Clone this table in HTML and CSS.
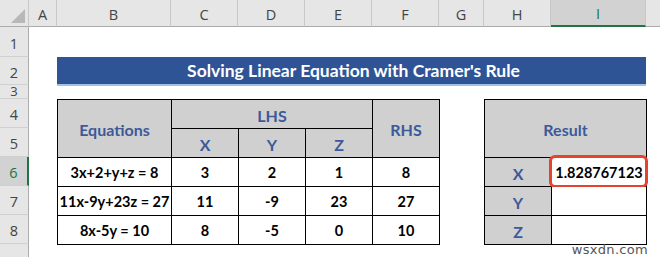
FILE: index.html
```html
<!DOCTYPE html>
<html>
<head>
<meta charset="utf-8">
<link rel="stylesheet" href="styles.css">
</head>
<body>
<div class="sheet">
  <div class="corner"><span class="tri"></span></div>
  <div class="ch">A</div>
  <div class="ch">B</div>
  <div class="ch">C</div>
  <div class="ch">D</div>
  <div class="ch">E</div>
  <div class="ch">F</div>
  <div class="ch">G</div>
  <div class="ch">H</div>
  <div class="ch ch-sel">I</div>
  <div class="ch ch-last"></div>

  <div class="rh r1">1</div>
  <div class="rh r2">2</div>
  <div class="rh r3"><span>3</span></div>
  <div class="rh r4">4</div>
  <div class="rh r5">5</div>
  <div class="rh r6 rh-sel">6</div>
  <div class="rh r7">7</div>
  <div class="rh r8">8</div>
  <div class="rh r9"></div>

  <div class="title">Solving Linear Equation with Cramer's Rule</div>

  <table class="eq">
    <colgroup>
      <col class="w-eq">
      <col class="w-n">
      <col class="w-n">
      <col class="w-n">
      <col class="w-n">
    </colgroup>
    <tr>
      <th rowspan="2">Equations</th>
      <th colspan="3">LHS</th>
      <th rowspan="2">RHS</th>
    </tr>
    <tr>
      <th>X</th>
      <th>Y</th>
      <th>Z</th>
    </tr>
    <tr><td>3x+2+y+z = 8</td><td>3</td><td>2</td><td>1</td><td>8</td></tr>
    <tr><td>11x-9y+23z = 27</td><td>11</td><td>-9</td><td>23</td><td>27</td></tr>
    <tr><td>8x-5y = 10</td><td>8</td><td>-5</td><td>0</td><td>10</td></tr>
  </table>

  <div class="res">
    <div class="res-head">Result</div>
    <div class="res-lbl">X</div>
    <div class="res-val"><span class="hl"></span>1.828767123</div>
    <div class="res-lbl">Y</div>
    <div class="res-val"></div>
    <div class="res-lbl">Z</div>
    <div class="res-val"></div>
  </div>

  <div class="mark">wsxdn.com</div>
</div>
</body>
</html>
```
FILE: styles.css
```css
html, body {
  margin: 0;
  padding: 0;
  background: #ffffff;
}
body {
  width: 660px;
  height: 257px;
  overflow: hidden;
  font-family: Lato, "Open Sans", "Liberation Sans", sans-serif;
}
.sheet {
  display: grid;
  grid-template-columns: 29px 28px 114px 67px 67px 67px 67px 45px 67px 95px 1fr;
  grid-template-rows: 27px 30px 28px 14px 29px 29px 29px 29px 29px 1fr;
  width: 660px;
  height: 257px;
  position: relative;
  background: #ffffff;
}
.corner {
  grid-row: 1;
  grid-column: 1;
  background: #e6e6e6;
  border-right: 1px solid #c8c8c8;
  border-bottom: 1px solid #ababab;
  box-sizing: border-box;
  position: relative;
}
.tri {
  position: absolute;
  right: 3px;
  bottom: 3px;
  width: 0;
  height: 0;
  border-left: 14px solid transparent;
  border-bottom: 14px solid #b8b8b8;
}
.ch {
  grid-row: 1;
  background: #e6e6e6;
  border-right: 1px solid #c8c8c8;
  border-bottom: 1px solid #ababab;
  box-sizing: border-box;
  display: flex;
  align-items: center;
  justify-content: center;
  font-family: "Open Sans", "Liberation Sans", sans-serif;
  font-size: 14.5px;
  color: #444444;
  padding-top: 2px;
}
.ch-sel {
  background: #d2d2d2;
  border-bottom: 2px solid #217346;
  color: #217346;
}
.ch-last {
  border-right: none;
}
.rh {
  grid-column: 1;
  background: #e6e6e6;
  border-right: 1px solid #ababab;
  border-bottom: 1px solid #d0d0d0;
  box-sizing: border-box;
  display: flex;
  align-items: center;
  justify-content: center;
  font-family: "Open Sans", "Liberation Sans", sans-serif;
  font-size: 14.5px;
  color: #444444;
  padding-top: 3px;
}
.r1 { grid-row: 2; }
.r2 { grid-row: 3; }
.r3 { grid-row: 4; overflow: hidden; align-items: flex-end; padding-top: 0; }
.r3 span { display: block; line-height: 14px; height: 14px; font-size: 13px; }
.r4 { grid-row: 5; }
.r5 { grid-row: 6; }
.r6 { grid-row: 7; }
.r7 { grid-row: 8; }
.r8 { grid-row: 9; }
.r9 { grid-row: 10; border-bottom: none; }
.rh-sel {
  background: #d2d2d2;
  border-right: 2px solid #217346;
  color: #217346;
}
.title {
  grid-row: 3;
  grid-column: 3 / 11;
  height: 27px;
  background: #2f5496;
  border-bottom: 2px solid #9dc3e6;
  color: #ffffff;
  font-weight: 700;
  font-size: 17.5px;
  display: flex;
  align-items: center;
  justify-content: center;
  padding-left: 4px;
}
table {
  border-collapse: collapse;
  width: 100%;
  height: 100%;
  table-layout: fixed;
}
.w-eq { width: 114px; }
.w-n { width: 67px; }
tr { height: 29px; }
th, td {
  border: 1px solid #000000;
  text-align: center;
  padding: 0;
  font-size: 14.5px;
  font-weight: 700;
}
th {
  background: #d0d0d0;
  color: #3c5a9a;
  font-size: 16px;
  padding-top: 2px;
}
td {
  color: #000000;
  background: #ffffff;
}
.eq {
  grid-row: 5 / 10;
  grid-column: 3 / 8;
}
.res {
  grid-row: 5 / 10;
  grid-column: 9 / 11;
  display: grid;
  grid-template-columns: 67px 1fr;
  grid-template-rows: 58px 29px 29px 29px;
  border-top: 1px solid #000000;
  border-left: 1px solid #000000;
  box-sizing: border-box;
  width: 163px;
  height: 146px;
}
.res > div {
  border-right: 1px solid #000000;
  border-bottom: 1px solid #000000;
  display: flex;
  align-items: center;
  justify-content: center;
  font-weight: 700;
}
.res-head {
  grid-column: 1 / 3;
  background: #d0d0d0;
  color: #3c5a9a;
  font-size: 16px;
  padding-top: 2px;
}
.res-lbl {
  background: #d0d0d0;
  color: #3c5a9a;
  font-size: 16px;
  padding-top: 2px;
}
.res-val {
  background: #ffffff;
  color: #000000;
  font-size: 14.5px;
  position: relative;
}
.hl {
  position: absolute;
  left: -3px;
  top: -3px;
  right: -2px;
  bottom: -2px;
  border: 3px solid #e5432b;
  border-radius: 6px;
}
.mark {
  position: absolute;
  right: 12px;
  bottom: 0;
  font-family: "DejaVu Sans", sans-serif;
  font-size: 13px;
  line-height: 14px;
  color: #555555;
  letter-spacing: 0.3px;
}
```
